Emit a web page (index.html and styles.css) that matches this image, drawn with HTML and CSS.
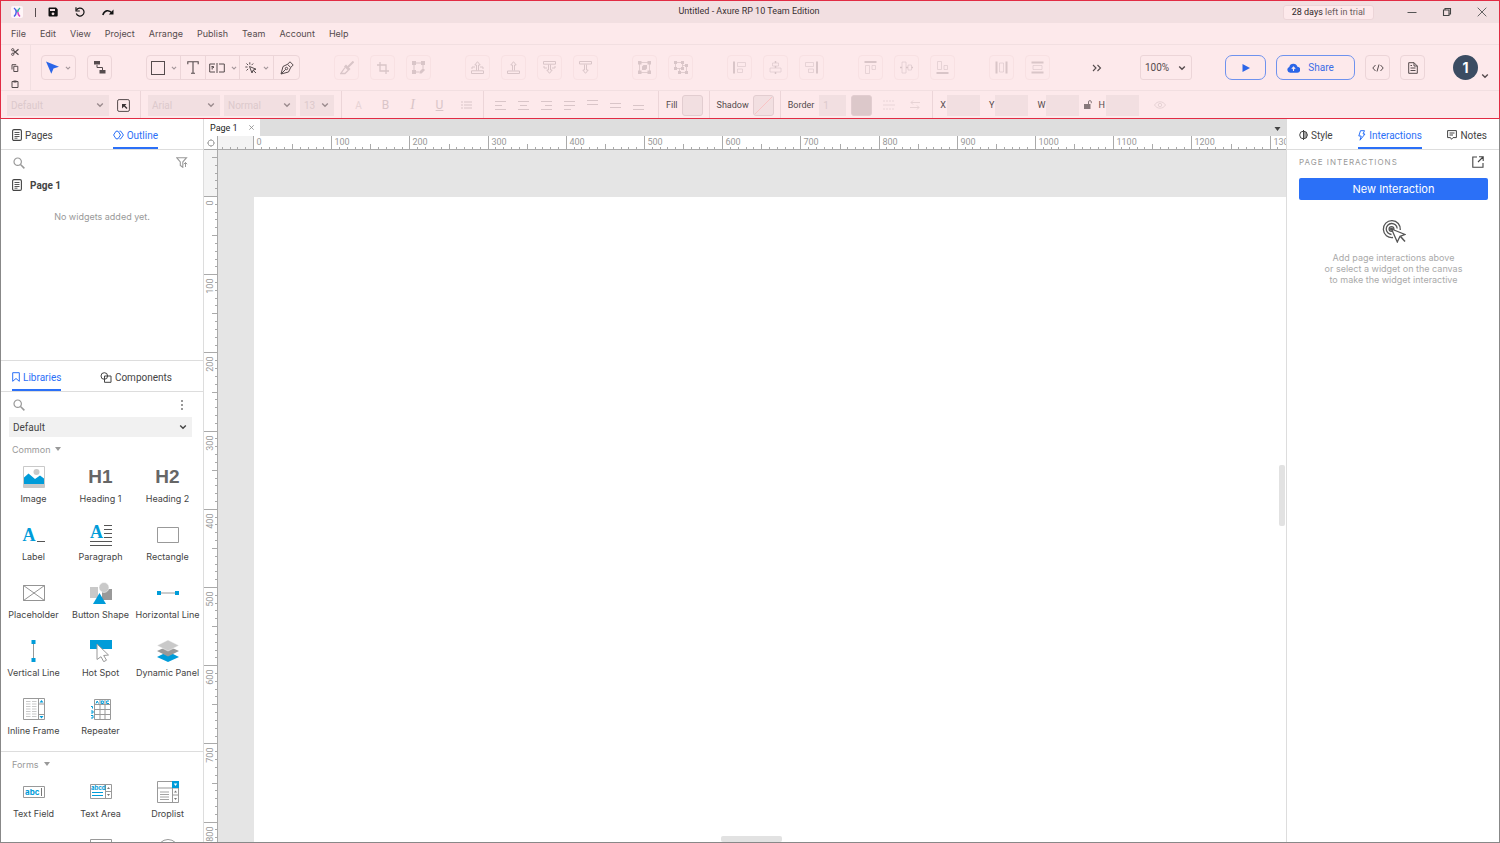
FILE: index.html
```
<!DOCTYPE html>
<html lang="en">
<head>
    <meta charset="UTF-8">
    <meta name="viewport" content="width=device-width, initial-scale=1.0">
    <title>Untitled - Axure RP 10 Team Edition</title>
    <link rel="stylesheet" href="styles.css">
</head>
<body>
    <!-- Shared icons -->
    <svg class="symbols" width="0" height="0" aria-hidden="true">
        <symbol id="chevron" viewBox="0 0 8 8"><path d="M1.2 2.5 4 5.3 6.8 2.5" fill="none" stroke="currentColor" stroke-width="1.4"/></symbol>
        <symbol id="search" viewBox="0 0 12 12"><circle cx="4.7" cy="4.7" r="3.7" fill="none" stroke="currentColor" stroke-width="1.2"/><path d="M7.5 7.5 11.4 11.4" stroke="currentColor" stroke-width="1.5"/></symbol>
        <symbol id="doc" viewBox="0 0 10 12"><rect x=".6" y=".6" width="8.8" height="10.8" rx="1.4" fill="none" stroke="currentColor" stroke-width="1.1"/><path d="M2.5 3.5h5M2.5 5.5h5M2.5 7.5h5M2.5 9.2h3" stroke="currentColor" stroke-width=".9"/></symbol>
        <symbol id="triangle" viewBox="0 0 6 4"><path d="M0 0h6L3 4z" fill="currentColor"/></symbol>
    </svg>

    <header class="topbar">
        <div class="titlebar">
            <div class="quick">
                <svg class="logo" width="12" height="12" viewBox="0 0 12 12"><rect width="12" height="12" rx="2" fill="#fff6f8"/><path d="M3 2C6 4 6 8 3 10.500" fill="none" stroke="#4a62e8" stroke-width="1.500"/><path d="M9 2C7.500 3 6.800 4.500 6.800 6" fill="none" stroke="#37b4a0" stroke-width="1.500"/><path d="M6.800 6C6.800 7.500 7.500 9 9 10.500" fill="none" stroke="#d43fc4" stroke-width="1.500"/></svg>
                <span class="bar"></span>
                <button class="plain" aria-label="Save"><svg width="10" height="10" viewBox="0 0 10 10"><path d="M1.500.500H8L9.700 2.200V8.500a1 1 0 0 1-1 1H1.500a1 1 0 0 1-1-1v-7a1 1 0 0 1 1-1z" fill="#111"/><path d="M2 2h5v2H2z" fill="#f2dfe1"/><circle cx="5" cy="6.800" r="1.400" fill="#f2dfe1"/></svg></button>
                <button class="plain" aria-label="Undo"><svg width="10" height="10" viewBox="0 0 10 10"><path d="M1.500 3.200A4 4 0 1 1 1.300 6.500" fill="none" stroke="#111" stroke-width="1.200"/><path d="M1 .200V4h3.800" fill="none" stroke="#111" stroke-width="1.200"/></svg></button>
                <button class="plain" aria-label="Redo"><svg width="12" height="8" viewBox="0 0 12 8"><path d="M.800 7C2.500 2 7 1.500 10 5" fill="none" stroke="#111" stroke-width="1.500"/><path d="M11.500 1.500V6.500H6.800z" fill="#111"/></svg></button>
            </div>
            <h1>Untitled - Axure RP 10 Team Edition</h1>
            <div class="window-tools">
                <a class="trial" href="#"><b>28 days</b> left in trial</a>
                <button class="plain" aria-label="Minimize"><svg width="10" height="10" viewBox="0 0 10 10"><path d="M.500 5.500h9" stroke="#555"/></svg></button>
                <button class="plain" aria-label="Restore"><svg width="10" height="10" viewBox="0 0 10 10"><path d="M1.500 3h5.500v5.500H1.500zM3 3V1.500h5.500V7H7" fill="none" stroke="#444" stroke-width="1.100"/></svg></button>
                <button class="plain" aria-label="Close"><svg width="10" height="10" viewBox="0 0 10 10"><path d="M.700.700 9.300 9.300M9.300.700.700 9.300" stroke="#555" stroke-width=".900"/></svg></button>
            </div>
        </div>

        <nav class="menubar">
            <a href="#">File</a>
            <a href="#">Edit</a>
            <a href="#">View</a>
            <a href="#">Project</a>
            <a href="#">Arrange</a>
            <a href="#">Publish</a>
            <a href="#">Team</a>
            <a href="#">Account</a>
            <a href="#">Help</a>
        </nav>

        <div class="toolbar">
            <div class="clipboard">
                <button class="plain" aria-label="Cut"><svg width="8" height="8" viewBox="0 0 8 8"><path d="M2.500 2.500 7.500 6.800M2.500 5.500 7.500 1.200" stroke="#554b4d" stroke-width="1.200"/><circle cx="1.700" cy="1.700" r="1.100" fill="none" stroke="#554b4d"/><circle cx="1.700" cy="6.300" r="1.100" fill="none" stroke="#554b4d"/></svg></button>
                <button class="plain" aria-label="Copy"><svg width="8" height="8" viewBox="0 0 8 8"><path d="M2.800 2.300h4v5.200h-4zM1 5.500V.700h4.200" fill="none" stroke="#554b4d"/></svg></button>
                <button class="plain" aria-label="Paste"><svg width="8" height="8" viewBox="0 0 8 8"><path d="M1 1.500h6v6H1z" fill="none" stroke="#554b4d"/><path d="M2.500.500h3v2h-3z" fill="#554b4d"/></svg></button>
            </div>

            <div class="tools">
                <div class="tool-group">
                    <button class="tool wide" aria-label="Select"><svg width="13" height="13" viewBox="0 0 13 13"><path d="M0 .500 13 5.800 7.500 7.500 5.300 12.800z" fill="#2b65e8"/></svg><svg class="mini"><use href="#chevron"/></svg></button>
                    <button class="tool" aria-label="Connector"><svg width="13" height="13" viewBox="0 0 13 13"><path d="M1 0h6v3.500H1zM6.500 9h6v3.500h-6z" fill="#554b4d"/><path d="M4 4v2.500h5.500V9" fill="none" stroke="#554b4d"/></svg></button>
                </div>
                <div class="tool-joined">
                    <button class="tool wide" aria-label="Rectangle"><svg width="14" height="14" viewBox="0 0 14 14"><rect x=".500" y=".500" width="13" height="13" fill="none" stroke="#554b4d"/></svg><svg class="mini"><use href="#chevron"/></svg></button>
                    <button class="tool" aria-label="Text"><svg width="12" height="13" viewBox="0 0 12 13"><path d="M.800 3.200V.800h10.400v2.400M6 .800V12M4 12.300h4" fill="none" stroke="#554b4d" stroke-width="1.100"/></svg></button>
                    <button class="tool wide" aria-label="Form input"><svg width="16" height="10" viewBox="0 0 16 10"><path d="M6 1H.700v8H6M10 1h5.300v8H10M8 0v10M3.200 3.500v3M2.500 3.500h2v1.500" fill="none" stroke="#554b4d"/></svg><svg class="mini"><use href="#chevron"/></svg></button>
                    <button class="tool wide" aria-label="Interactive"><svg width="12" height="12" viewBox="0 0 12 12"><path d="M4.500 4.500 11 7.200 8 8.200 7 11zM8 8.200 11 11" fill="none" stroke="#554b4d"/><path d="M4.800.300v2.200M1.500 1.500l1.600 1.600M8.200 1.500 6.600 3.100M.300 5h2.200M1.500 8.500l1.600-1.600" stroke="#554b4d"/></svg><svg class="mini"><use href="#chevron"/></svg></button>
                    <button class="tool" aria-label="Pen"><svg width="14" height="14" viewBox="0 0 14 14"><path d="M1 13 3 5.500 7.500 3.300 10.700 6.500 8.500 11z M7.500 3.300 10 .800l3.200 3.200-2.500 2.500M1 13l4.700-4.700" fill="none" stroke="#554b4d"/><circle cx="6.500" cy="7.500" r="1.200" fill="none" stroke="#554b4d"/></svg></button>
                </div>
                <div class="tool-group off">
                    <button class="tool" disabled aria-label="Format painter"><svg width="14" height="14" viewBox="0 0 14 14"><path d="M13.500.500 8 6" stroke="currentColor" stroke-width="2"/><path d="M6 3.500 10.500 8 8.500 10 4 5.500z" fill="currentColor"/><path d="M5 6.500 .800 12.500H5L8 9.500" fill="none" stroke="currentColor" stroke-width="1.300"/></svg></button>
                    <button class="tool" disabled aria-label="Crop"><svg width="12" height="12" viewBox="0 0 12 12"><path d="M3 0v9h9M0 3h9v9" fill="none" stroke="currentColor" stroke-width="1.300"/></svg></button>
                    <button class="tool" disabled aria-label="Edit points"><svg width="13" height="13" viewBox="0 0 13 13"><path d="M2 2h9M2 2v9M11 2v5M2 11h5" stroke="currentColor"/><path d="M0 0h4v4H0zM9 0h4v4H9zM0 9h4v4H0zM11 7l2 2-3.500 3.500H7.500v-2z" fill="currentColor"/></svg></button>
                </div>
                <div class="tool-group off">
                    <button class="tool" disabled aria-label="Bring to front"><svg width="13" height="13" viewBox="0 0 13 13"><path d="M.500 9.800h12v2.700H.500zM5.500 9.500V4H3.800L6.500.700 9.200 4H7.500v5.500M1 8V6h3M12 8V6H9" fill="none" stroke="currentColor"/></svg></button>
                    <button class="tool" disabled aria-label="Bring forward"><svg width="13" height="13" viewBox="0 0 13 13"><path d="M.500 10h12v2.500H.500zM5.500 9.500V4H3.800L6.500.700 9.200 4H7.500v5.500" fill="none" stroke="currentColor"/></svg></button>
                    <button class="tool" disabled aria-label="Send backward"><svg width="13" height="13" viewBox="0 0 13 13"><path d="M.500.500h12v2.700H.500zM5.500 3.500V9H3.800l2.700 3.300L9.200 9H7.500V3.500M1 5v2h3M12 5v2H9" fill="none" stroke="currentColor"/></svg></button>
                    <button class="tool" disabled aria-label="Send to back"><svg width="13" height="13" viewBox="0 0 13 13"><path d="M.500.500h12V3H.500zM5.500 3.500V9H3.800l2.700 3.300L9.200 9H7.500V3.500" fill="none" stroke="currentColor"/></svg></button>
                </div>
                <div class="tool-group off">
                    <button class="tool" disabled aria-label="Group"><svg width="13" height="13" viewBox="0 0 13 13"><path d="M1.500 1.500h10v10h-10z" fill="none" stroke="currentColor" stroke-width=".800"/><path d="M0 0h3.500v3.500H0zM9.500 0H13v3.500H9.500zM0 9.500h3.500V13H0zM9.500 9.500H13V13H9.500zM5.500 4H9v3.500L7.500 9H4V5.500z" fill="currentColor"/></svg></button>
                    <button class="tool" disabled aria-label="Ungroup"><svg width="14" height="13" viewBox="0 0 14 13"><path d="M1.500 1.500h7v6h-7zM8.500 4.500h4v7h-7v-4" fill="none" stroke="currentColor" stroke-width=".800"/><path d="M0 0h3v3H0zM7 0h3v3H7zM0 6h3v3H0zM7 6h3v3H7zM11 3h3v3h-3zM11 10h3v3h-3zM4 10h3v3H4z" fill="currentColor"/></svg></button>
                </div>
                <div class="tool-group off">
                    <button class="tool" disabled aria-label="Align left"><svg width="13" height="13" viewBox="0 0 13 13"><path d="M1 .500v12" stroke="currentColor" stroke-width="2"/><path d="M4.500 1.500h8v4h-8zM4.500 8h5v3.500h-5z" fill="none" stroke="currentColor" opacity=".6"/></svg></button>
                    <button class="tool" disabled aria-label="Align center"><svg width="13" height="13" viewBox="0 0 13 13"><path d="M6.500 0v2M6.500 5v2M6.500 11v2" stroke="currentColor" stroke-width="1.500"/><path d="M3.500 2h6v3h-6zM1 7h11v4H1z" fill="none" stroke="currentColor" opacity=".6"/></svg></button>
                    <button class="tool" disabled aria-label="Align right"><svg width="13" height="13" viewBox="0 0 13 13"><path d="M12 .500v12" stroke="currentColor" stroke-width="2"/><path d="M.500 1.500h8v4h-8zM3.500 8h5v3.500h-5z" fill="none" stroke="currentColor" opacity=".6"/></svg></button>
                </div>
                <div class="tool-group off">
                    <button class="tool" disabled aria-label="Align top"><svg width="13" height="13" viewBox="0 0 13 13"><path d="M.500 1h12" stroke="currentColor" stroke-width="2"/><path d="M1.500 4.500h4v8h-4zM8 4.500h3.500v4H8z" fill="none" stroke="currentColor" opacity=".6"/></svg></button>
                    <button class="tool" disabled aria-label="Align middle"><svg width="13" height="13" viewBox="0 0 13 13"><path d="M0 6.500h2M6 6.500h2M11.500 6.500H13" stroke="currentColor" stroke-width="1.500"/><path d="M2 1h4v11H2zM8 4h3.500v5H8z" fill="none" stroke="currentColor" opacity=".6"/></svg></button>
                    <button class="tool" disabled aria-label="Align bottom"><svg width="13" height="13" viewBox="0 0 13 13"><path d="M.500 12h12" stroke="currentColor" stroke-width="2"/><path d="M1.500.500h4v8h-4zM8 4.500h3.500v4H8z" fill="none" stroke="currentColor" opacity=".6"/></svg></button>
                </div>
                <div class="tool-group off">
                    <button class="tool" disabled aria-label="Distribute horizontally"><svg width="13" height="13" viewBox="0 0 13 13"><path d="M1.500.500v12M11.500.500v12" stroke="currentColor" stroke-width="2"/><path d="M4.500 2h4v9h-4z" fill="none" stroke="currentColor" opacity=".6"/></svg></button>
                    <button class="tool" disabled aria-label="Distribute vertically"><svg width="13" height="13" viewBox="0 0 13 13"><path d="M.500 1.500h12M.500 11.500h12" stroke="currentColor" stroke-width="2"/><path d="M2 4.500h9v4H2z" fill="none" stroke="currentColor" opacity=".6"/></svg></button>
                </div>
            </div>

            <div class="actions">
                <button class="plain more" aria-label="More tools"><svg width="10" height="8" viewBox="0 0 10 8"><path d="M1 1l3 3-3 3M5.500 1l3 3-3 3" fill="none" stroke="#554b4d" stroke-width="1.100"/></svg></button>
                <div class="select zoom">
                    <select aria-label="Zoom"><option>100%</option></select>
                    <svg class="chev"><use href="#chevron"/></svg>
                </div>
                <button class="pill" aria-label="Preview"><svg width="8" height="8" viewBox="0 0 8 8"><path d="M.500 0 8 4 .500 8z" fill="#2b65e8"/></svg></button>
                <button class="pill share"><svg width="13" height="10" viewBox="0 0 13 10"><path d="M3.200 9.800A3 3 0 0 1 2.300 4 4.200 4.200 0 0 1 10.400 3.800 3 3 0 0 1 10 9.800z" fill="#2b65e8"/><path d="M6.500 8V4.500M4.800 5.800 6.500 4.100 8.200 5.800" fill="none" stroke="#fde9eb" stroke-width="1.100"/></svg>Share</button>
                <button class="tool" aria-label="Inspect"><svg width="12" height="8" viewBox="0 0 12 8"><path d="M3.500 1 .800 4l2.700 3M8.500 1l2.700 3-2.700 3M7 .500 5 7.500" fill="none" stroke="#554b4d"/></svg></button>
                <button class="tool" aria-label="Notes document"><svg width="10" height="12" viewBox="0 0 10 12"><path d="M.700.700H6L9.300 4v7.300H.700zM6 .700V4h3.300M2.500 6h5M2.500 8.500h5M2.500 3.500H4" fill="none" stroke="#554b4d"/></svg></button>
                <button class="plain account" aria-label="Account menu"><span class="avatar">1</span><svg class="chev"><use href="#chevron"/></svg></button>
            </div>
        </div>

        <div class="stylebar">
            <div class="cell">
                <div class="select disabled s-style"><select disabled aria-label="Widget style"><option>Default</option></select><svg class="chev"><use href="#chevron"/></svg></div>
                <button class="plain" aria-label="Manage styles"><svg width="13" height="13" viewBox="0 0 13 13"><rect x=".600" y=".600" width="11.800" height="11.800" rx="1.500" fill="none" stroke="#554b4d"/><path d="M5 9.500V5H9.500L8 6.500l2.500 2.500-1 1L7 7.500z" fill="#3c3335"/></svg></button>
            </div>
            <div class="cell fonts">
                <div class="select disabled s-font"><select disabled aria-label="Font"><option>Arial</option></select><svg class="chev"><use href="#chevron"/></svg></div>
                <div class="select disabled s-font"><select disabled aria-label="Font weight"><option>Normal</option></select><svg class="chev"><use href="#chevron"/></svg></div>
                <div class="select disabled s-size"><select disabled aria-label="Font size"><option>13</option></select><svg class="chev"><use href="#chevron"/></svg></div>
            </div>
            <div class="cell format">
                <button class="plain glyph faint" disabled>A</button>
                <button class="plain glyph" disabled>B</button>
                <button class="plain glyph italic" disabled>I</button>
                <button class="plain glyph under" disabled>U</button>
                <button class="plain" disabled aria-label="Bullets"><svg width="11" height="8" viewBox="0 0 11 8"><path d="M0 1h2M3 1h8M0 4h2M3 4h8M0 7h2M3 7h8" stroke="currentColor"/></svg></button>
            </div>
            <div class="cell aligns">
                <button class="plain" disabled aria-label="Text left"><svg width="12" height="10" viewBox="0 0 12 10"><path d="M0 1.500h11M0 5.500h7M0 9.500h11" stroke="currentColor"/></svg></button>
                <button class="plain" disabled aria-label="Text center"><svg width="12" height="10" viewBox="0 0 12 10"><path d="M0 1.500h11M2 5.500h7M0 9.500h11" stroke="currentColor"/></svg></button>
                <button class="plain" disabled aria-label="Text right"><svg width="12" height="10" viewBox="0 0 12 10"><path d="M0 1.500h11M4 5.500h7M0 9.500h11" stroke="currentColor"/></svg></button>
                <button class="plain" disabled aria-label="Justify"><svg width="12" height="10" viewBox="0 0 12 10"><path d="M0 1.500h11M0 5.500h11M0 9.500h7" stroke="currentColor"/></svg></button>
                <button class="plain" disabled aria-label="Text top"><svg width="12" height="10" viewBox="0 0 12 10"><path d="M0 .500h11M0 4.500h11" stroke="currentColor"/></svg></button>
                <button class="plain" disabled aria-label="Text middle"><svg width="12" height="10" viewBox="0 0 12 10"><path d="M0 3.500h11M0 7.500h11" stroke="currentColor"/></svg></button>
                <button class="plain" disabled aria-label="Text bottom"><svg width="12" height="10" viewBox="0 0 12 10"><path d="M0 5.500h11M0 9.500h11" stroke="currentColor"/></svg></button>
            </div>
            <div class="cell tight">
                <span>Fill</span>
                <button class="swatch" disabled aria-label="Fill color"></button>
            </div>
            <div class="cell tight">
                <span>Shadow</span>
                <button class="swatch" disabled aria-label="Shadow"><svg width="19" height="19" viewBox="0 0 19 19"><path d="M1 18 18 1" stroke="#fac3c4"/></svg></button>
            </div>
            <div class="cell border-cell">
                <label for="border">Border</label>
                <input id="border" class="field b-width" value="1" disabled>
                <button class="swatch dark" disabled aria-label="Border color"></button>
                <button class="plain line-style" disabled aria-label="Line style"><svg width="12" height="10" viewBox="0 0 12 10"><path d="M0 1h12M0 9h12" stroke="currentColor" stroke-dasharray="2 1"/><path d="M0 5h12" stroke="currentColor"/></svg></button>
                <button class="plain arrow-style" disabled aria-label="Arrow style"><svg width="10" height="10" viewBox="0 0 10 10"><path d="M10 2.500H1M3 .500 1 2.500l2 2M0 7.500h9M7 5.500l2 2-2 2" fill="none" stroke="currentColor"/></svg></button>
            </div>
            <div class="cell size-cell">
                <label>X<input class="field" disabled></label>
                <label>Y<input class="field" disabled></label>
                <label>W<input class="field" disabled></label>
                <svg class="lock" width="8" height="10" viewBox="0 0 8 10"><path d="M0 4h6.500v5H0z" fill="#88797b"/><path d="M4.500 4V2a1.400 1.400 0 0 1 2.800 0v1.200" fill="none" stroke="#88797b"/></svg>
                <label>H<input class="field" disabled></label>
                <svg class="eye" width="12" height="8" viewBox="0 0 12 8"><path d="M.500 4C3-.300 9-.300 11.500 4 9 8.300 3 8.300.500 4z" fill="none" stroke="currentColor"/><circle cx="6" cy="4" r="1.700" fill="none" stroke="currentColor"/></svg>
            </div>
        </div>
    </header>

    <main class="workspace">
        <aside class="left-panel">
            <section class="outline">
                <nav class="tabs">
                    <a href="#"><svg width="10" height="12"><use href="#doc"/></svg>Pages</a>
                    <a href="#" class="active"><svg width="11" height="10" viewBox="0 0 11 10"><path d="M3 1.200h2L7.500 5 5 8.800H3L.600 5zM6.500 1.200h1.300L10.400 5 7.800 8.800H6.500" fill="none" stroke="currentColor" stroke-linejoin="round"/></svg>Outline</a>
                </nav>
                <div class="search-row">
                    <button class="plain" aria-label="Search outline"><svg width="12" height="12"><use href="#search"/></svg></button>
                    <button class="plain" aria-label="Filter"><svg width="12" height="11" viewBox="0 0 12 11"><path d="M.700.700h9.800L6.800 5v5.300L4.300 8.500V5z" fill="none" stroke="currentColor" stroke-width="1.100"/><path d="M9.500 10V5.500M7.800 7.200 9.500 5.500l1.700 1.700" fill="none" stroke="currentColor"/></svg></button>
                </div>
                <p class="page-row"><svg width="10" height="12"><use href="#doc"/></svg>Page 1</p>
                <p class="empty">No widgets added yet.</p>
            </section>

            <section class="libraries">
                <nav class="tabs lib-tabs">
                    <a href="#" class="active"><svg width="8" height="10" viewBox="0 0 8 10"><path d="M.700.700h6.600v8.600L4 6.500.700 9.300z" fill="none" stroke="currentColor"/></svg>Libraries</a>
                    <a href="#"><svg width="12" height="11" viewBox="0 0 12 11"><circle cx="4.300" cy="4" r="3.300" fill="none" stroke="currentColor"/><path d="M4.500 4h6.500v6.300H4.500z" fill="none" stroke="currentColor"/></svg>Components</a>
                </nav>
                <div class="search-row">
                    <button class="plain" aria-label="Search libraries"><svg width="12" height="12"><use href="#search"/></svg></button>
                    <button class="plain" aria-label="Library options"><svg width="12" height="12" viewBox="0 0 12 12"><path d="M5 1h2v2H5zM5 5h2v2H5zM5 9h2v2H5z" fill="currentColor"/></svg></button>
                </div>
                <div class="select library"><select aria-label="Library"><option>Default</option></select><svg class="chev"><use href="#chevron"/></svg></div>

                <h2>Common <svg width="6" height="4"><use href="#triangle"/></svg></h2>
                <ul class="widgets">
                    <li><svg width="22" height="22" viewBox="0 0 22 22"><path d="M.500.500h21v21H.500z" fill="#fff" stroke="#c9c9c9"/><circle cx="13.500" cy="6" r="3" fill="#c9c9c9"/><path d="M1 11.500 5.500 7.500 12 13l5-3.500 4 3V18H1z" fill="#009cd9"/><path d="M1 18h20v3.500H1z" fill="#c9c9c9"/></svg>Image</li>
                    <li><b class="heading-glyph">H1</b>Heading 1</li>
                    <li><b class="heading-glyph">H2</b>Heading 2</li>
                    <li><span class="letter-icon"><b>A</b><i></i></span>Label</li>
                    <li><svg class="overflow" width="22" height="22" viewBox="0 0 22 22"><text x="0" y="14" class="serif-a">A</text><path d="M14 1.500h8M14 5.500h8M14 9.500h8M14 13.500h8M0 17.500h22M0 21.500h22" stroke="#555"/></svg>Paragraph</li>
                    <li><svg width="22" height="22" viewBox="0 0 22 22"><path d="M.500 3.500h21v15H.500z" fill="#fff" stroke="#999"/></svg>Rectangle</li>
                    <li><svg width="22" height="22" viewBox="0 0 22 22"><path d="M.500 3.500h21v15H.500zM.500 3.500l21 15M21.500 3.500l-21 15" fill="none" stroke="#888" stroke-width=".900"/></svg>Placeholder</li>
                    <li><svg width="22" height="22" viewBox="0 0 22 22"><path d="M0 5h8v11H0z" fill="#c9c9c9"/><path d="M12 7h10v11H12z" fill="#999"/><circle cx="14" cy="5.500" r="5" fill="#c9c9c9" stroke="#fff" stroke-width=".500"/><path d="M9.500 11 16 22H3z" fill="#009cd9"/></svg>Button Shape</li>
                    <li><svg width="22" height="22" viewBox="0 0 22 22"><path d="M2 11h18" stroke="#999"/><path d="M0 9h4v4H0zM18 9h4v4h-4z" fill="#009cd9"/></svg>Horizontal Line</li>
                    <li><svg width="22" height="22" viewBox="0 0 22 22"><path d="M10.500 2v18" stroke="#999"/><path d="M8.500 0h4v4h-4zM8.500 18h4v4h-4z" fill="#009cd9"/></svg>Vertical Line</li>
                    <li><svg width="22" height="22" viewBox="0 0 22 22"><path d="M0 0h22v9H0z" fill="#009cd9"/><path d="M7 4l11.500 11-4.800.500 2.800 4.700-2.800 1.500-2.700-5L7 19.500z" fill="#fff" stroke="#999"/></svg>Hot Spot</li>
                    <li><svg width="22" height="22" viewBox="0 0 22 22"><path d="M11 11.500 22 17l-11 5L0 17z" fill="#009cd9"/><path d="M11 6l11 5-11 5.500L0 11z" fill="#999"/><path d="M11 0l11 5.500L11 11 0 5.500z" fill="#c9c9c9" stroke="#fff" stroke-width=".500"/></svg>Dynamic Panel</li>
                    <li><svg width="22" height="22" viewBox="0 0 22 22"><path d="M.500.500h21v21H.500zM15.500.500v21M15.500 6h6M15.500 16.500h6" fill="none" stroke="#999"/><path d="M3 3.500h4.500M9 3.500h4.500M3 6h4.500M9 6h4.500M3 8.500h4.500M9 8.500h4.500M3 11h4.500M9 11h4.500M3 13.500h4.500M9 13.500h4.500M3 16h4.500M9 16h4.500M3 18.500h4.500M9 18.500h4.500" stroke="#bbb" stroke-width=".800"/><path d="M18.500 2l2 2.500h-4zM18.500 20.500l2-2.500h-4z" fill="#009cd9"/></svg>Inline Frame</li>
                    <li><svg width="22" height="22" viewBox="0 0 22 22"><path d="M4.500 1.500h16v20h-16zM4.500 6.500h16M4.500 11.500h16M4.500 16.500h16M10 1.500v20M15 1.500v20" fill="none" stroke="#999"/><path d="M6 5.500 7.200 3 8.500 5.500M11.300 3h2v2.500h-2zM19 3h-2.300v2.500H19M1 8.500h1.500v2M1 13h2v2H1M1 17.500h2v2.500H1" fill="none" stroke="#009cd9"/></svg>Repeater</li>
                </ul>

                <h2 class="divided">Forms <svg width="6" height="4"><use href="#triangle"/></svg></h2>
                <ul class="widgets">
                    <li><svg width="22" height="22" viewBox="0 0 22 22"><path d="M.500 5.500h21v11H.500z" fill="#fff" stroke="#999"/><text x="2" y="14" class="abc">abc</text><path d="M18.500 7v8" stroke="#777"/></svg>Text Field</li>
                    <li><svg width="22" height="22" viewBox="0 0 22 22"><path d="M.500 3.500h21v14H.500zM15.500 3.500v14M15.500 10.500h6" fill="#fff" stroke="#999"/><text x="1" y="9" class="abc small">abcd</text><path d="M2 11.500h11M2 14.500h11" stroke="#009cd9" stroke-width="1.200"/><path d="M18.500 6l1.500 2h-3zM18.500 15l1.500-2h-3z" fill="#777"/></svg>Text Area</li>
                    <li><svg width="22" height="22" viewBox="0 0 22 22"><path d="M.500.500h21v21H.500zM.500 7h21M15.500 7v14.500M15.500 14h6" fill="none" stroke="#999"/><path d="M15 0h7v7h-7z" fill="#009cd9"/><path d="M16.800 2.500h3.400L18.500 5z" fill="#fff"/><path d="M3 11h9M3 13.500h9M3 16h9M3 18.500h9" stroke="#999" stroke-width=".900"/><path d="M18.500 9.500l1.500 2h-3zM18.500 19l1.500-2h-3z" fill="#777"/></svg>Droplist</li>
                    <li aria-label="List Box"><svg width="22" height="22" viewBox="0 0 22 22"><path d="M.500 5.500h21v15H.500z" fill="#fff" stroke="#999"/></svg></li>
                    <li aria-label="Checkbox"><svg width="22" height="22" viewBox="0 0 22 22"><path d="M.500.500h21v21H.500z" fill="#fff" stroke="#999"/></svg></li>
                    <li aria-label="Radio Button"><svg width="22" height="22" viewBox="0 0 22 22"><circle cx="11" cy="11" r="10.500" fill="#fff" stroke="#999"/></svg></li>
                </ul>
            </section>
        </aside>

        <section class="editor">
            <div class="page-tabs">
                <div class="page-tab">Page 1 <button class="plain" aria-label="Close tab"><svg width="5" height="5" viewBox="0 0 5 5"><path d="M.300.300l4.400 4.400M4.700.300.300 4.700" stroke="#888" stroke-width=".800"/></svg></button></div>
                <button class="plain tab-list" aria-label="All tabs"><svg width="7" height="4"><use href="#triangle"/></svg></button>
            </div>
            <div class="stage">
                <div class="corner"><svg width="8" height="8" viewBox="0 0 8 8"><circle cx="4" cy="4" r="3" fill="none" stroke="#aaa"/><path d="M4 0v2M4 6v2M0 4h2M6 4h2" stroke="#aaa"/></svg></div>
                <div class="ruler ruler-x"><svg id="ruler-x"></svg></div>
                <div class="ruler ruler-y"><svg id="ruler-y"></svg></div>
                <div class="canvas">
                    <div class="paper"></div>
                    <span class="scroll scroll-y"></span>
                    <span class="scroll scroll-x"></span>
                </div>
            </div>
        </section>

        <aside class="right-panel">
            <nav class="tabs">
                <a href="#"><svg width="9" height="10" viewBox="0 0 9 10"><circle cx="4.500" cy="5" r="3.800" fill="none" stroke="currentColor"/><path d="M4.500 0v10M4.500 3H8M4.500 5h4M4.500 7H8" stroke="currentColor"/></svg>Style</a>
                <a href="#" class="active"><svg width="8" height="11" viewBox="0 0 8 11"><path d="M2.500.700h4L5 4h2L2 10.200 3.200 6H.800z" fill="none" stroke="currentColor"/></svg>Interactions</a>
                <a href="#"><svg width="10" height="10" viewBox="0 0 10 10"><path d="M.600.600h8.800v7H6L4.500 9.300 3.500 7.600H.600zM2.500 3h5M2.500 5h3.500" fill="none" stroke="currentColor"/></svg>Notes</a>
            </nav>
            <div class="interactions">
                <div class="section-head">
                    <h2>PAGE INTERACTIONS</h2>
                    <button class="plain" aria-label="Open interaction editor"><svg width="12" height="12" viewBox="0 0 12 12"><path d="M5 1H.800v10.200H11V7M7 .800h4.200V5M11 1 6 6" fill="none" stroke="currentColor" stroke-width="1.100"/></svg></button>
                </div>
                <button class="primary">New Interaction</button>
                <div class="hint">
                    <svg width="24" height="24" viewBox="0 0 24 24"><g fill="none" stroke="#555" stroke-width="1.300"><path d="M11 18.500A8.500 8.500 0 1 1 18.300 11"/><path d="M9.500 15.500A5.500 5.500 0 1 1 15.200 9.500"/><circle cx="9.500" cy="10" r="2.400"/><path d="M18.500 17.500 23 22.500" stroke-width="1.500"/><path d="M9.500 10 23 15.500 18 17.300 15.300 23z" fill="#fff"/></g><circle cx="9.500" cy="10" r="1.600" fill="#555"/></svg>
                    <p>Add page interactions above<br>or select a widget on the canvas<br>to make the widget interactive</p>
                </div>
            </div>
        </aside>
    </main>

    <script src="rulers.js"></script>
</body>
</html>
```
FILE: styles.css
```
* { margin: 0; padding: 0; box-sizing: border-box; }
body {
    font-family: Roboto, sans-serif;
    font-size: 10px;
    color: #444;
    background-color: #fff;
    display: flex;
    flex-direction: column;
    height: 100vh;
    overflow: hidden;
}
a { color: inherit; text-decoration: none; }
ul { list-style: none; }
svg { display: block; flex: none; }
button, input, select { font: inherit; color: inherit; }
.symbols { position: absolute; }
.plain { background: none; border: none; display: flex; align-items: center; justify-content: center; }
.chev { width: 8px; height: 8px; }
.overflow { overflow: visible; }

/* Top bar */
.topbar { background-color: #fde9eb; border: 1px solid #e22c44; color: #554b4d; flex: none; }
.titlebar {
    background-color: #f2dfe1; height: 22px; padding: 0 12px 0 10px;
    display: grid; grid-template-columns: 1fr auto 1fr; align-items: center;
}
.titlebar h1 { font-size: 9px; line-height: 12px; font-weight: 400; color: #3a3032; padding-bottom: 2px; }
.quick { display: flex; align-items: center; gap: 17px; }
.quick .bar { width: 1px; height: 9px; background-color: #554b4d; margin: 0 -5px; }
.window-tools { display: flex; align-items: center; justify-content: flex-end; gap: 25px; }
.trial {
    background-color: #fde9eb; border: 1px solid #ecd5d8; border-radius: 3px; font-size: 9px;
    line-height: 13px; padding: 0 8px; margin-right: 8px; color: #6b5d60;
}
.trial b { font-weight: 400; color: #2f2628; }
.menubar {
    display: flex; gap: 14px; padding: 0 10px; height: 22px; align-items: center;
    border-bottom: 1px solid #f2dfe1; font-family: Inter, sans-serif; font-size: 9px;
}

.toolbar { display: flex; align-items: center; height: 46px; border-bottom: 1px solid #f2dfe1; }
.clipboard {
    width: 30px; height: 100%; border-right: 1px solid #f2dfe1; display: flex; flex-direction: column;
    align-items: center; justify-content: space-between; padding: 3px 2px 2px 0;
}
.tools { display: flex; gap: 34px; padding-left: 10px; }
.tool-group { display: flex; gap: 11px; }
.tool {
    width: 25px; height: 25px; background: none; border: 1px solid #ecd5d8; border-radius: 4px;
    display: flex; align-items: center; justify-content: center;
}
.tool.wide { width: 35px; gap: 6px; }
.mini { width: 6px; height: 6px; color: #a4969a; }
.tool-joined { display: flex; border: 1px solid #ecd5d8; border-radius: 4px; height: 25px; }
.tool-joined .tool { border: none; border-right: 1px solid #ecd5d8; border-radius: 0; height: 23px; width: 25px; }
.tool-joined .tool.wide { width: 34px; }
.tool-joined .tool:last-child { border-right: none; }
.off .tool { color: #d9c5c8; border-color: #f8e1e3; }
.actions { display: flex; align-items: center; gap: 10px; margin-left: auto; padding-right: 10px; }
.more { margin-right: 28px; }
.select { position: relative; display: flex; align-items: center; }
.select select { appearance: none; background: none; border: none; width: 100%; height: 100%; padding-left: 4px; opacity: 1; }
.select .chev { position: absolute; right: 5px; pointer-events: none; }
.zoom { width: 52px; height: 25px; border: 1px solid #ecd5d8; border-radius: 3px; margin-right: 23px; }
.pill {
    width: 41px; height: 25px; border: 1px solid #6f92ee; border-radius: 7px; background: none; color: #3a6ce6;
    display: flex; align-items: center; justify-content: center;
}
.share { width: 79px; gap: 8px; padding-right: 10px; }
.account { gap: 3px; margin-left: 18px; }
.account .chev { align-self: flex-end; }
.avatar {
    width: 25px; height: 25px; border-radius: 50%; background-color: #3b4c62; color: #fff;
    font-family: Inter, sans-serif; font-size: 14px; font-weight: 700; line-height: 25px; text-align: center;
}

.stylebar { display: flex; align-items: stretch; height: 27px; color: #d9c5c8; }
.cell { display: flex; align-items: center; gap: 8px; padding: 1px 7px 0; border-right: 1px solid #ecd5d8; }
.cell:last-child { border-right: none; }
.cell:first-child { padding: 1px 10px 0 6px; }
.cell span, .cell label { color: #554b4d; font-size: 9px; }
.disabled { background-color: #f2dfe1; height: 21px; color: #dcc9cc; }
.disabled .chev { color: #9b8b8e; right: 5px; }
.s-style { width: 102px; }
.s-font { width: 72px; }
.s-size { width: 34px; }
.fonts { gap: 4px; }
.format { gap: 16px; padding: 1px 11px 0; }
.glyph { width: 11px; font-size: 12px; }
.faint { opacity: .6; font-size: 10px; }
.italic { font-family: "Liberation Serif", serif; font-style: italic; font-size: 14px; }
.under { text-decoration: underline; }
.aligns { gap: 11px; padding: 1px 13px 0 11px; }
.tight { gap: 4px; padding: 1px 6px 0 7px; }
.swatch {
    width: 21px; height: 21px; background-color: #f2dfe1; border: 1px solid #e2cdd0; border-radius: 3px;
    display: flex; align-items: center; justify-content: center;
}
.dark { background-color: #dcc8ca; }
.field { width: 33px; height: 21px; border: none; background-color: #f2dfe1; padding-left: 4px; color: #dcc9cc; }
.b-width { width: 27px; }
.border-cell { gap: 5px; padding-right: 12px; }
.line-style { margin-left: 6px; opacity: .5; }
.arrow-style { margin-left: 10px; opacity: .6; }
.size-cell { gap: 9px; }
.size-cell label { display: flex; align-items: center; gap: 1px; }
.lock { margin-left: -4px; margin-right: -3px; }
.eye { margin-left: 6px; opacity: .6; }

/* Workspace */
.workspace { flex: 1; min-height: 0; display: flex; border: 1px solid #888; border-top: none; }
.left-panel { width: 203px; flex: none; border-right: 1px solid #ddd; display: flex; flex-direction: column; }
.outline { height: 242px; flex: none; border-bottom: 1px solid #ddd; }
.libraries { flex: 1; min-height: 0; overflow: hidden; }
.tabs { display: flex; justify-content: space-between; height: 31px; padding: 0 45px 0 11px; border-bottom: 1px solid #ddd; }
.tabs a {
    display: flex; align-items: center; gap: 3px; height: 30px; padding-top: 4px;
    border-bottom: 2px solid transparent;
}
.tabs .active { color: #2b70f7; border-bottom-color: #2b70f7; }
.lib-tabs { padding-right: 31px; }
.search-row { display: flex; justify-content: space-between; align-items: center; height: 25px; padding: 0 15px 0 12px; color: #999; }
.page-row { display: flex; align-items: center; gap: 8px; font-weight: 700; padding-left: 11px; height: 20px; }
.empty { font-family: Inter, sans-serif; color: #999; font-size: 9px; text-align: center; margin-top: 16px; }
.library { margin: 0 11px 0 8px; height: 20px; background-color: #f1f1f1; }
.libraries h2 {
    display: flex; align-items: center; gap: 5px; height: 24px; padding-left: 11px;
    font-family: Inter, sans-serif; font-size: 9px; font-weight: 400; color: #999;
}
.libraries .divided { border-top: 1px solid #ddd; height: 25px; }
.widgets {
    display: grid; grid-template-columns: repeat(3, 67px); grid-auto-rows: 58px;
    margin-left: -1px; font-family: Inter, sans-serif; font-size: 9px;
}
.widgets li {
    display: flex; flex-direction: column; align-items: center; gap: 5px; padding-top: 5px;
    line-height: 12px; white-space: nowrap;
}
.heading-glyph { font-family: "Liberation Sans", sans-serif; font-size: 19px; line-height: 22px; color: #666; }
.letter-icon { display: flex; align-items: flex-end; gap: 1px; width: 22px; height: 22px; padding-bottom: 4px; }
.letter-icon b { font-family: "Liberation Serif", serif; font-size: 18px; line-height: 14px; color: #009cd9; }
.letter-icon i { width: 8px; height: 1px; background-color: #555; }
.serif-a { font-family: "Liberation Serif", serif; font-size: 18px; font-weight: 700; fill: #009cd9; }
.abc { font-family: Inter, sans-serif; font-size: 8px; font-weight: 700; fill: #009cd9; }
.small { font-size: 6px; }

/* Editor */
.editor { flex: 1; min-width: 0; display: flex; flex-direction: column; }
.page-tabs { height: 17px; background-color: #dedede; display: flex; justify-content: space-between; flex: none; }
.page-tab { background-color: #fff; display: flex; align-items: center; gap: 11px; padding: 0 6px; font-size: 9px; color: #222; }
.tab-list { padding: 3px 5px 0 0; color: #444; }
.stage { flex: 1; min-height: 0; display: grid; grid-template-columns: 14px 1fr; grid-template-rows: 14px 1fr; }
.corner { display: flex; align-items: center; justify-content: center; border-right: 1px solid #aaa; border-bottom: 1px solid #aaa; }
.ruler { overflow: hidden; min-width: 0; min-height: 0; }
.ruler svg { width: 100%; height: 100%; }
.ruler-x { border-bottom: 1px solid #aaa; background: linear-gradient(to right, #f3f3f3 36px, #fff 36px); }
.ruler-y { border-right: 1px solid #aaa; background: linear-gradient(to bottom, #f3f3f3 47px, #fff 47px); }
.ruler line { stroke: #aaa; stroke-width: 1px; }
.ruler text { font-family: Roboto, sans-serif; font-size: 9px; fill: #999; }
.canvas { position: relative; background-color: #e5e5e5; padding: 47px 0 0 36px; }
.paper { background-color: #fff; height: 100%; }
.scroll { position: absolute; background-color: #e2e2e2; border-radius: 2px; }
.scroll-y { width: 6px; height: 61px; right: 1px; top: calc(50% - 31px); }
.scroll-x { width: 61px; height: 6px; bottom: 0; left: calc(50% - 31px); }

/* Interactions */
.right-panel { width: 213px; flex: none; border-left: 1px solid #ddd; }
.right-panel .tabs { padding: 0 12px; }
.interactions { padding: 0 11px 0 12px; }
.section-head { display: flex; justify-content: space-between; align-items: center; height: 24px; padding-right: 4px; }
.section-head h2 { font-family: Inter, sans-serif; font-size: 8px; font-weight: 400; letter-spacing: 1px; color: #999; }
.primary {
    display: block; width: 100%; height: 22px; margin-top: 4px; background-color: #2b70f7; color: #fff;
    border: none; border-radius: 2px; font-family: Inter, sans-serif; font-size: 11px;
}
.hint { display: flex; flex-direction: column; align-items: center; gap: 9px; margin-top: 19px; }
.hint p { font-family: Inter, sans-serif; color: #aaa; font-size: 9px; line-height: 11px; text-align: center; }
```
FILE: rulers.js
```
const SCALE = 0.782; // screen pixels per canvas unit
const SIZE = 13;
const NS = 'http://www.w3.org/2000/svg';

function addLine(svg, x1, y1, x2, y2) {
    const line = document.createElementNS(NS, 'line');
    line.setAttribute('x1', x1);
    line.setAttribute('y1', y1);
    line.setAttribute('x2', x2);
    line.setAttribute('y2', y2);
    svg.appendChild(line);
}

function drawRuler(id, origin, vertical) {
    const svg = document.getElementById(id);
    svg.innerHTML = '';
    const length = vertical ? svg.clientHeight : svg.clientWidth;
    const first = -Math.floor(origin / SCALE / 10) * 10;

    for (let unit = first; origin + unit * SCALE < length; unit += 10) {
        const pos = Math.round(origin + unit * SCALE) - 0.5;
        let tick = 2;
        if (unit % 50 === 0) tick = 5;
        if (unit % 100 === 0) tick = SIZE;

        if (vertical) addLine(svg, SIZE - tick, pos, SIZE, pos);
        else addLine(svg, pos, SIZE - tick, pos, SIZE);

        if (unit % 100 === 0) {
            const text = document.createElementNS(NS, 'text');
            text.textContent = unit;
            if (vertical) {
                text.setAttribute('text-anchor', 'end');
                text.setAttribute('transform', `translate(9 ${pos + 4}) rotate(-90)`);
            } else {
                text.setAttribute('x', pos + 3);
                text.setAttribute('y', 9);
            }
            svg.appendChild(text);
        }
    }
}

function drawRulers() {
    drawRuler('ruler-x', 36, false);
    drawRuler('ruler-y', 47, true);
}

window.addEventListener('resize', drawRulers);
drawRulers();
```
